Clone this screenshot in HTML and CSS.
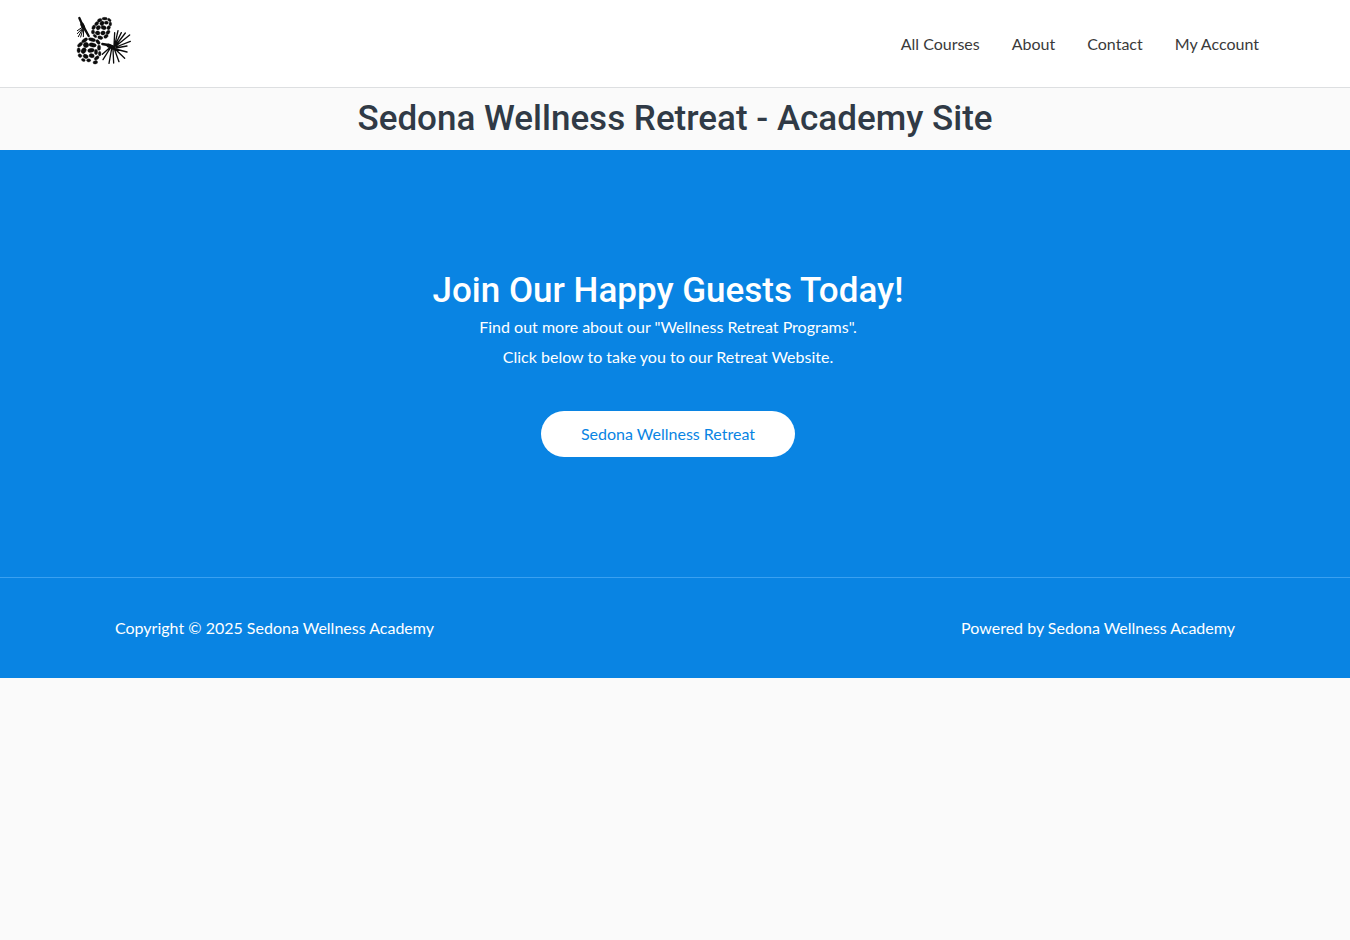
FILE: index.html
```html
<!DOCTYPE html>
<html lang="en">
<head>
<meta charset="utf-8">
<meta name="viewport" content="width=device-width, initial-scale=1">
<title>Sedona Wellness Retreat - Academy Site</title>
<link rel="stylesheet" href="styles.css">
</head>
<body>
<header class="site-header">
  <div class="header-inner">
    <a class="logo" href="#" aria-label="Sedona Wellness Academy">
      <svg viewBox="15 15 180 150" width="60" height="50" aria-hidden="true">
        <g fill="none" stroke="#0c0c0c" stroke-linecap="round">
          <path stroke-width="7" d="M28 24L36 42L42 53L56 78"/>
          <path stroke-width="11" d="M36 43L40 51"/>
          <path stroke-width="3" d="M38 54L22 71M38 56L25 80M39 57L32 81M41 58L40 80M35 53L22 62"/>
          <path stroke-width="7" d="M97 102L114 105L132 112"/>
          <path stroke-width="12" d="M116 107L130 113"/>
          <path stroke-width="4" d="M132 107L134 68M134 107L144 62M134 108L154 68M136 108L166 69M138 108L179 75M138 111L181 94M137 114L171 108M136 117L171 126M136 118L164 145M133 117L147 155M129 117L131 159M125 116L117 160M121 114L99 149M119 113L97 133"/>
        </g>
        <g fill="#0c0c0c" stroke="#0c0c0c" stroke-width="1">
          <ellipse cx="89" cy="31" rx="7" ry="5" transform="rotate(-25 89 31)"/>
          <ellipse cx="104" cy="26" rx="8" ry="4"/>
          <ellipse cx="118" cy="30" rx="6" ry="4" transform="rotate(35 118 30)"/>
          <ellipse cx="80" cy="41" rx="7" ry="5" transform="rotate(-45 80 41)"/>
          <ellipse cx="96" cy="40" rx="6" ry="7" transform="rotate(40 96 40)"/>
          <ellipse cx="109" cy="38" rx="6" ry="5"/>
          <ellipse cx="121" cy="42" rx="4" ry="6"/>
          <ellipse cx="71" cy="52" rx="5" ry="7" transform="rotate(25 71 52)"/>
          <ellipse cx="85" cy="53" rx="7" ry="6" transform="rotate(-35 85 53)"/>
          <ellipse cx="101" cy="53" rx="8" ry="6" transform="rotate(15 101 53)"/>
          <ellipse cx="116" cy="53" rx="5" ry="6" transform="rotate(30 116 53)"/>
          <ellipse cx="69" cy="66" rx="5" ry="6"/>
          <ellipse cx="83" cy="69" rx="7" ry="6" transform="rotate(20 83 69)"/>
          <ellipse cx="99" cy="69" rx="7" ry="6" transform="rotate(-20 99 69)"/>
          <ellipse cx="114" cy="67" rx="7" ry="5" transform="rotate(-50 114 67)"/>
          <ellipse cx="75" cy="78" rx="6" ry="4" transform="rotate(35 75 78)"/>
          <ellipse cx="91" cy="83" rx="8" ry="5" transform="rotate(15 91 83)"/>
          <ellipse cx="108" cy="79" rx="7" ry="5" transform="rotate(-35 108 79)"/>
          <ellipse cx="44" cy="91" rx="10" ry="5" transform="rotate(-35 44 91)"/>
          <ellipse cx="66" cy="89" rx="11" ry="5" transform="rotate(15 66 89)"/>
          <ellipse cx="84" cy="96" rx="8" ry="5" transform="rotate(50 84 96)"/>
          <ellipse cx="30" cy="104" rx="9" ry="5" transform="rotate(-40 30 104)"/>
          <ellipse cx="48" cy="105" rx="8" ry="8" transform="rotate(50 48 105)"/>
          <ellipse cx="68" cy="105" rx="11" ry="6" transform="rotate(10 68 105)"/>
          <ellipse cx="87" cy="113" rx="5" ry="8"/>
          <ellipse cx="26" cy="121" rx="5" ry="8"/>
          <ellipse cx="41" cy="122" rx="9" ry="7" transform="rotate(-60 41 122)"/>
          <ellipse cx="63" cy="121" rx="10" ry="6" transform="rotate(-10 63 121)"/>
          <ellipse cx="78" cy="126" rx="5" ry="8"/>
          <ellipse cx="89" cy="131" rx="4" ry="7"/>
          <ellipse cx="30" cy="137" rx="6" ry="5" transform="rotate(35 30 137)"/>
          <ellipse cx="47" cy="139" rx="8" ry="6" transform="rotate(25 47 139)"/>
          <ellipse cx="65" cy="137" rx="8" ry="6" transform="rotate(10 65 137)"/>
          <ellipse cx="40" cy="150" rx="6" ry="4" transform="rotate(25 40 150)"/>
          <ellipse cx="56" cy="151" rx="6" ry="5"/>
          <ellipse cx="80" cy="144" rx="8" ry="5" transform="rotate(-35 80 144)"/>
          <ellipse cx="76" cy="157" rx="7" ry="5" transform="rotate(-10 76 157)"/>
        </g>
      </svg>
    </a>
    <nav class="main-nav" aria-label="Main">
      <a href="#">All Courses</a>
      <a href="#">About</a>
      <a href="#">Contact</a>
      <a href="#">My Account</a>
    </nav>
  </div>
</header>
<main>
  <h1 class="page-title">Sedona Wellness Retreat - Academy Site</h1>
  <section class="cta">
    <h2>Join Our Happy Guests Today!</h2>
    <p>Find out more about our "Wellness Retreat Programs".</p>
    <p>Click below to take you to our Retreat Website.</p>
    <a class="cta-button" href="#">Sedona Wellness Retreat</a>
  </section>
</main>
<footer class="site-footer">
  <div class="footer-inner">
    <p>Copyright © 2025 Sedona Wellness Academy</p>
    <p>Powered by Sedona Wellness Academy</p>
  </div>
</footer>
</body>
</html>
```
FILE: styles.css
```css
* {
  box-sizing: border-box;
}

body {
  margin: 0;
  background: #fafafa;
  color: #3a3a3a;
  font-family: Lato, "Liberation Sans", sans-serif;
  font-size: 16px;
  line-height: 30px;
}

h1,
h2,
p {
  margin: 0;
}

a {
  color: inherit;
  text-decoration: none;
}

h1,
h2 {
  font-family: Roboto, "Liberation Sans", sans-serif;
  font-size: 35px;
  font-weight: 500;
  line-height: 42px;
  text-align: center;
}

.site-header {
  background: #fff;
  border-bottom: 1px solid #dddfe1;
}

.header-inner {
  display: flex;
  align-items: center;
  justify-content: space-between;
  max-width: 1200px;
  margin: 0 auto;
}

.logo {
  display: flex;
  padding: 15px 0 22px;
}

.main-nav {
  display: flex;
}

.main-nav a {
  padding: 0 16px;
}

.page-title {
  padding: 10px 16px;
  color: #303a46;
}

.cta {
  display: flex;
  flex-direction: column;
  align-items: center;
  padding: 120px 14px 120px 0;
  background: #0984e3;
  color: #fff;
  text-align: center;
}

.cta-button {
  margin-top: 39px;
  padding: 8px 40px;
  border-radius: 23px;
  background: #fff;
  color: #0984e3;
}

.site-footer {
  border-top: 1px solid #3aa0f0;
  background: #0984e3;
  color: #fff;
}

.footer-inner {
  display: flex;
  flex-wrap: wrap;
  justify-content: space-between;
  max-width: 1160px;
  margin: 0 auto;
  padding: 35px 20px;
}
```
